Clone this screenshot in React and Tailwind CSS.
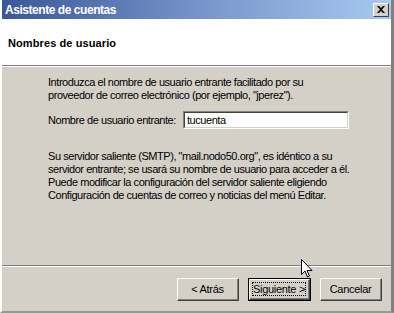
import React from 'react';

function WinButton({ children, isDefault }) {
  if (isDefault) {
    return (
      <div className="w-[63px] h-[23px] border border-black">
        <div className="h-full border-t border-l border-t-white border-l-white border-b border-r border-b-[#404040] border-r-[#404040]">
          <div className="h-full border-b border-r border-b-[#808080] border-r-[#808080] p-[2px]">
            <div className="h-full border border-dotted border-black flex items-center justify-center text-[11px] leading-none text-black whitespace-nowrap tracking-[-0.3px]">
              {children}
            </div>
          </div>
        </div>
      </div>
    );
  }
  return (
    <div className="w-[62px] h-[23px] border-t border-l border-t-white border-l-white border-b border-r border-b-[#404040] border-r-[#404040]">
      <div className="h-full border-b border-r border-b-[#808080] border-r-[#808080] flex items-center justify-center text-[11px] leading-none text-black whitespace-nowrap tracking-[-0.3px]">
        {children}
      </div>
    </div>
  );
}

export default function App() {
  return (
    <div className="w-[394px] h-[313px] bg-[#d4d0c8] font-['Liberation_Sans',Arial,sans-serif] relative overflow-hidden select-none">
      <div className="h-full flex flex-col border-l-2 border-l-white border-r-[3px] border-r-[#808080] border-b-2 border-b-[#9a9894]">
        {/* title bar */}
        <div className="h-[19px] flex items-center justify-between pl-[3px] pr-[2px] bg-gradient-to-r from-[#3a5898] via-[#7693c9] to-[#a6caf0]">
          <span className="text-[12px] font-bold text-white leading-none tracking-[-0.45px]">Asistente de cuentas</span>
          <div className="w-[16px] h-[14px] bg-[#d4d0c8] border-t border-l border-t-white border-l-white border-b border-r border-b-[#404040] border-r-[#404040] flex items-center justify-center">
            <svg width="8" height="7" viewBox="0 0 8 7">
              <path d="M0 0h2l2 2 2-2h2L5 3.5 8 7H6L4 5 2 7H0l3-3.5z" fill="#000" />
            </svg>
          </div>
        </div>

        {/* header */}
        <div className="h-[47px] bg-white border-b border-b-[#808080] pt-[11px] pl-[6px]">
          <span className="text-[11px] font-bold text-black leading-[13px] tracking-[0.1px]">Nombres de usuario</span>
        </div>
        <div className="h-px bg-white" />

        {/* body */}
        <div className="flex-1 flex flex-col pl-[46px] pt-[9px] text-[11px] leading-[13px] text-black tracking-[-0.45px]">
          <p>
            Introduzca el nombre de usuario entrante facilitado por su
            <br />
            proveedor de correo electrónico (por ejemplo, "jperez").
          </p>
          <div className="flex items-center mt-[9px]">
            <span className="w-[135px]">Nombre de usuario entrante:</span>
            <div className="w-[166px] h-[18px] border-t border-l border-t-[#808080] border-l-[#808080] border-b border-r border-b-white border-r-white">
              <div className="h-full bg-white border-t border-l border-t-[#404040] border-l-[#404040] border-b border-r border-b-[#d4d0c8] border-r-[#d4d0c8] flex items-center pl-[2px]">
                tucuenta
              </div>
            </div>
          </div>
          <p className="mt-[21px]">
            Su servidor saliente (SMTP), "mail.nodo50.org", es idéntico a su
            <br />
            servidor entrante; se usará su nombre de usuario para acceder a él.
            <br />
            Puede modificar la configuración del servidor saliente eligiendo
            <br />
            Configuración de cuentas de correo y noticias del menú Editar.
          </p>
        </div>

        {/* separator */}
        <div className="h-px bg-[#808080]" />
        <div className="h-px bg-white" />

        {/* buttons */}
        <div className="flex justify-end gap-[9px] pt-[11px] pb-[10px] pr-[9px]">
          <WinButton>&lt; Atrás</WinButton>
          <WinButton isDefault>Siguiente &gt;</WinButton>
          <WinButton>Cancelar</WinButton>
        </div>
      </div>

      {/* mouse cursor */}
      <svg className="absolute left-[301px] top-[259px]" width="12" height="19" viewBox="0 0 12 19">
        <path d="M0.5 0.5v15l3.5-3.5 2.5 6 2-1-2.5-5.5h5z" fill="#fff" stroke="#000" strokeWidth="1" />
      </svg>
    </div>
  );
}
